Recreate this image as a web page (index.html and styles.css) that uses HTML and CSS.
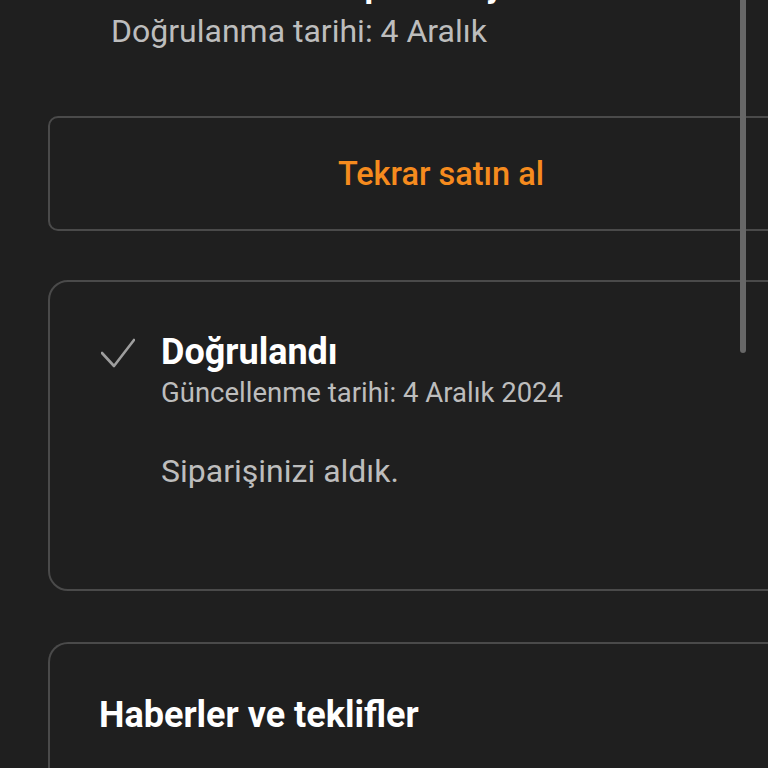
FILE: index.html
```html
<!DOCTYPE html>
<html lang="tr">

<head>
    <meta charset="UTF-8">
    <meta name="viewport" content="width=device-width, initial-scale=1.0">
    <title>Sipariş Ayrıntıları</title>
    <link rel="stylesheet" href="styles.css">
</head>

<body>
    <div class="scrollbar"></div>

    <div class="page">
        <div class="status-top">
            <h2 class="status-title">Teslimata hazır: paketin yolda</h2>
            <p class="status-date">Doğrulanma tarihi: 4 Aralık</p>
        </div>

        <button class="rebuy-button">Tekrar satın al</button>

        <div class="card status-card">
            <div class="status-row">
                <svg class="check-icon" width="34" height="30" viewBox="0 0 34 30">
                    <polyline points="1,15 13,28 33,2" fill="none" stroke="#9e9e9e" stroke-width="2.6" stroke-linecap="round" stroke-linejoin="round" />
                </svg>
                <div class="status-info">
                    <h3 class="status-name">Doğrulandı</h3>
                    <p class="status-updated">Güncellenme tarihi: 4 Aralık 2024</p>
                    <p class="status-message">Siparişinizi aldık.</p>
                </div>
            </div>
        </div>

        <div class="card news-card">
            <h3 class="news-title">Haberler ve teklifler</h3>
        </div>
    </div>
</body>

</html>
```

FILE: styles.css
```css
:root {
    --bg-color: #1f1f1f;
    --border-color: #4a4a4a;
    --text-primary: #ffffff;
    --text-secondary: #bdbdbd;
    --accent: #f68b1e;
}

body {
    font-family: 'Roboto', 'Noto Sans', sans-serif;
    background-color: var(--bg-color);
    color: var(--text-primary);
    margin: 0;
    padding: 0;
    overflow: hidden;
    height: 768px;
}

.scrollbar {
    position: absolute;
    top: 0;
    left: 740px;
    width: 6px;
    height: 353px;
    border-radius: 0 0 3px 3px;
    background-color: #676767;
}

.page {
    width: 786px;
    margin-left: 48px;
}

.status-top {
    padding-left: 63px;
    margin-top: -35px;
}

.status-title {
    margin: 0;
    font-size: 34px;
    line-height: 40px;
    font-weight: 700;
}

.status-date {
    margin: 8px 0 0;
    font-size: 32px;
    line-height: 36px;
    color: var(--text-secondary);
}

.rebuy-button {
    display: block;
    width: 100%;
    height: 115px;
    margin-top: 67px;
    background: transparent;
    border: 2px solid var(--border-color);
    border-radius: 10px;
    font-family: inherit;
    font-size: 32.5px;
    font-weight: 500;
    color: var(--accent);
    cursor: pointer;
}

.card {
    border: 2px solid var(--border-color);
    border-radius: 20px;
}

.status-card {
    margin-top: 49px;
    padding: 50px 0 100px 51px;
}

.status-row {
    display: flex;
    gap: 26px;
}

.check-icon {
    flex-shrink: 0;
    margin-top: 6px;
}

.status-name {
    margin: 0;
    font-size: 36px;
    line-height: 40px;
    font-weight: 700;
}

.status-updated {
    margin: 5px 0 0;
    font-size: 27.5px;
    line-height: 32px;
    color: var(--text-secondary);
}

.status-message {
    margin: 44px 0 0;
    font-size: 32px;
    line-height: 36px;
    color: var(--text-secondary);
}

.news-card {
    margin-top: 51px;
    padding: 51px 0 60px 49px;
    border-bottom: none;
}

.news-title {
    margin: 0;
    font-size: 36px;
    line-height: 40px;
    font-weight: 700;
}
```
